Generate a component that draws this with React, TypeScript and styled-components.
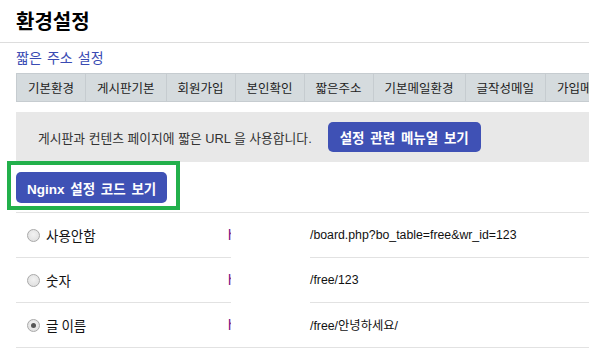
import React from "react";
import styled, { createGlobalStyle, css } from "styled-components";

const GlobalStyle = createGlobalStyle`
  html, body {
    margin: 0;
    padding: 0;
    background: #ffffff;
    overflow: hidden;
  }
  body {
    font-family: "Liberation Sans", "Noto Sans CJK KR", sans-serif;
    font-size: 12px;
    color: #222222;
  }
`;

const Page = styled.div`
  width: 760px;
`;

const Header = styled.header`
  height: 42px;
  display: flex;
  align-items: center;
  padding: 0 16px;
  border-bottom: 1px solid #dddddd;
`;

const Title = styled.h1`
  margin: 0;
  font-family: "Noto Sans CJK KR", sans-serif;
  font-size: 20px;
  font-weight: 700;
  line-height: 22px;
  color: #000000;
`;

const Content = styled.main`
  padding: 0 0 0 16px;
`;

const SectionLink = styled.a`
  display: block;
  padding-top: 5px;
  margin-bottom: 7px;
  font-family: "Noto Sans CJK KR", sans-serif;
  font-size: 14px;
  word-spacing: 2px;
  line-height: 18px;
  color: #3a4bb3;
  text-decoration: none;
`;

const Tabs = styled.nav`
  display: flex;
  border-top: 1px solid #c6ccd0;
  border-bottom: 1px solid #c6ccd0;
  border-left: 1px solid #c6ccd0;
  background: #d5dbde;
`;

const Tab = styled.span`
  flex: none;
  height: 27px;
  display: flex;
  align-items: center;
  padding: 0 11px;
  border-right: 1px solid #c6ccd0;
  font-family: "Noto Sans CJK KR", sans-serif;
  font-size: 12.5px;
  color: #222222;
  white-space: nowrap;
`;

const Notice = styled.div`
  margin-top: 10px;
  height: 50px;
  display: flex;
  align-items: center;
  gap: 16px;
  padding-left: 22px;
  background: #e8e8e8;
  color: #333333;
  font-size: 12.8px;
`;

const Button = styled.button<{ $h: number; $pad: number }>`
  height: ${(p) => p.$h}px;
  display: inline-flex;
  align-items: center;
  padding: 0 ${(p) => p.$pad}px;
  border: none;
  border-radius: 5px;
  background: #3f51b5;
  color: #ffffff;
  font-family: "Liberation Sans", "Noto Sans CJK KR", sans-serif;
  font-size: 13.5px;
  font-weight: 700;
  word-spacing: 2px;
  white-space: nowrap;
  cursor: pointer;
`;

const HighlightWrap = styled.div`
  position: relative;
  display: inline-block;
  margin-top: 10px;
  vertical-align: top;
  &::after {
    content: "";
    position: absolute;
    left: -9px;
    top: -11px;
    right: -13px;
    bottom: -7px;
    border: 4px solid #22b04b;
    pointer-events: none;
  }
`;

const ButtonBar = styled.div`
  height: 50px;
  line-height: 0;
`;

const Table = styled.div`
  border-top: 1px solid #e2e2e2;
  border-bottom: 1px solid #e2e2e2;
`;

const Row = styled.div`
  display: grid;
  grid-template-columns: 215px 79px 1fr;
`;

const Cell = styled.div<{ $last?: boolean }>`
  height: 44px;
  display: flex;
  align-items: center;
  ${(p) =>
    !p.$last &&
    css`
      border-bottom: 1px solid #e2e2e2;
    `}
`;

const LabelCell = styled(Cell)`
  padding-left: 11px;
  gap: 6px;
  font-family: "Noto Sans CJK KR", sans-serif;
  font-size: 13.5px;
  color: #111111;
`;

const Gap = styled.div``;

const UrlCell = styled(Cell)`
  font-size: 12.3px;
  color: #111111;
  white-space: nowrap;
`;

const Radio = styled.span<{ $checked?: boolean }>`
  flex: none;
  width: 11px;
  height: 11px;
  border-radius: 50%;
  border: 1px solid #a9a9a9;
  background: radial-gradient(circle at 50% 40%, #f2f2f2 0%, #dcdcdc 100%);
  display: flex;
  align-items: center;
  justify-content: center;
  &::after {
    content: "";
    width: 5px;
    height: 5px;
    border-radius: 50%;
    background: #555555;
    display: ${(p) => (p.$checked ? "block" : "none")};
  }
`;

const Clipped = styled.span`
  margin-left: auto;
  width: 3px;
  overflow: hidden;
  color: #7a0a82;
  font-family: "Liberation Sans", sans-serif;
  font-size: 14px;
  white-space: nowrap;
`;

const tabs = [
  "기본환경",
  "게시판기본",
  "회원가입",
  "본인확인",
  "짧은주소",
  "기본메일환경",
  "글작성메일",
  "가입메일",
];

const rows = [
  { label: "사용안함", url: "/board.php?bo_table=free&wr_id=123", checked: false },
  { label: "숫자", url: "/free/123", checked: false },
  { label: "글 이름", url: "/free/안녕하세요/", checked: true },
];

export default function App() {
  return (
    <Page>
      <GlobalStyle />
      <Header>
        <Title>환경설정</Title>
      </Header>
      <Content>
        <SectionLink href="#">짧은 주소 설정</SectionLink>
        <Tabs>
          {tabs.map((t) => (
            <Tab key={t}>{t}</Tab>
          ))}
        </Tabs>
        <Notice>
          <span>게시판과 컨텐츠 페이지에 짧은 URL 을 사용합니다.</span>
          <Button $h={30} $pad={12}>설정 관련 메뉴얼 보기</Button>
        </Notice>
        <ButtonBar>
          <HighlightWrap>
            <Button $h={31} $pad={11}>Nginx 설정 코드 보기</Button>
          </HighlightWrap>
        </ButtonBar>
        <Table>
          {rows.map((r, i) => {
            const last = i === rows.length - 1;
            return (
              <Row key={r.label}>
                <LabelCell $last={last}>
                  <Radio $checked={r.checked} />
                  <span>{r.label}</span>
                  <Clipped>http://</Clipped>
                </LabelCell>
                <Gap />
                <UrlCell $last={last}>{r.url}</UrlCell>
              </Row>
            );
          })}
        </Table>
      </Content>
    </Page>
  );
}
